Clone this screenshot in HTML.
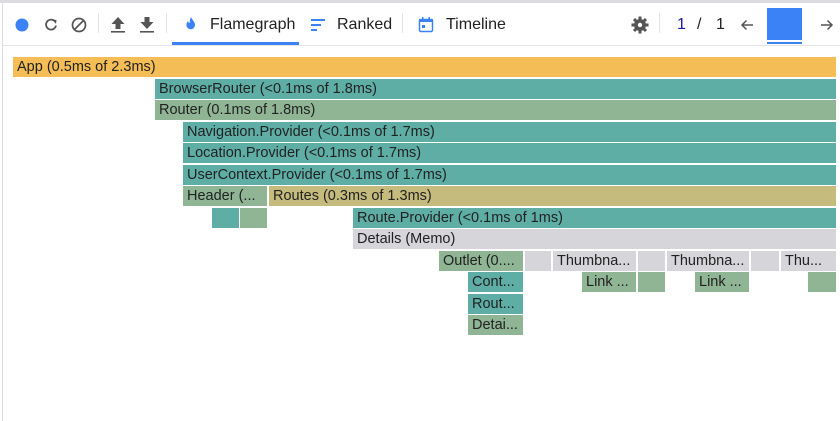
<!DOCTYPE html>
<html><head><meta charset="utf-8"><style>
*{margin:0;padding:0;box-sizing:border-box}
body{width:840px;height:421px;background:#fff;position:relative;overflow:hidden;font-family:"Liberation Sans",Arial,sans-serif;color:#222}
.top{position:absolute;left:0;top:0;width:840px;height:3px;background:#dcdce0}
.lb{position:absolute;left:2px;top:0;width:1px;height:421px;background:#dcdce0}
.hdr{position:absolute;left:3px;top:3px;right:0;height:43px;border-bottom:1px solid #e4e4e8}
.b{position:absolute;height:20px;font-size:14.5px;line-height:20px;padding-left:4px;white-space:nowrap;overflow:hidden;color:#222}
.y{background:#f4bd55}.t{background:#5eaea6}.g{background:#8fb595}.o{background:#c5bb7c}.s{background:#d5d5da}
.txt{position:absolute;font-size:16px;top:15px;line-height:20px}
.sep{position:absolute;top:13px;width:1px;height:20px;background:#e2e2e6}
</style></head><body>
<div class="top"></div><div class="lb"></div>
<div class="hdr"></div>
<svg style="position:absolute;left:0;top:0" width="840" height="46">
<circle cx="22" cy="25" r="6.5" fill="#3b82f6"/>
<path d="M55 21.5a5 5 0 1 0 1 4" fill="none" stroke="#555" stroke-width="1.8"/><path d="M52.5 19.5l4 0.5-0.5 4z" fill="#555"/>
<circle cx="79" cy="25" r="6.5" fill="none" stroke="#555" stroke-width="1.7"/><line x1="74.5" y1="29.5" x2="83.5" y2="20.5" stroke="#555" stroke-width="1.7"/>
<path d="M118 17l-6.5 7h4v5h5v-5h4z" fill="#555"/><rect x="111" y="31" width="14" height="1.6" fill="#555"/>
<path d="M147 29l-6.5-7h4v-5h5v5h4z" fill="#555"/><rect x="140" y="31" width="14" height="1.6" fill="#555"/>
<path d="M191 17c1 3 4 4.5 4 8a4.3 4.3 0 0 1-8.6 0c0-2 1-3 1.5-4 .5 1.5 1 2 1.8 2 0-2 .3-4 1.3-6z" fill="#3b82f6"/>
<rect x="172" y="42" width="127" height="3" fill="#3b82f6"/>
<rect x="311" y="19" width="14" height="2" fill="#3b82f6"/><rect x="311" y="24" width="10" height="2" fill="#3b82f6"/><rect x="311" y="29" width="6" height="2" fill="#3b82f6"/>
<rect x="419.5" y="19.5" width="13" height="12" rx="1.5" fill="none" stroke="#3b82f6" stroke-width="1.5"/><rect x="419" y="19" width="14" height="3" fill="#3b82f6"/><rect x="422" y="17" width="1.5" height="3" fill="#3b82f6"/><rect x="428.5" y="17" width="1.5" height="3" fill="#3b82f6"/><rect x="422" y="25" width="3" height="3" fill="#3b82f6"/>
<g stroke="#555" stroke-width="3"><line x1="640" y1="16.5" x2="640" y2="33.5"/><line x1="631.5" y1="25" x2="648.5" y2="25"/><line x1="634" y1="19" x2="646" y2="31"/><line x1="646" y1="19" x2="634" y2="31"/></g>
<circle cx="640" cy="25" r="6" fill="#555"/>
<circle cx="640" cy="25" r="2.2" fill="#fff"/>
<path d="M753 25h-11M746.5 20.5l-4.5 4.5 4.5 4.5" fill="none" stroke="#555" stroke-width="1.5"/>
<path d="M821 25h11M827.5 20.5l4.5 4.5-4.5 4.5" fill="none" stroke="#555" stroke-width="1.5"/>
<rect x="767" y="8" width="35" height="32" fill="#3b82f6"/><rect x="767" y="42" width="35" height="2" fill="#3b82f6"/>
</svg>
<div class="sep" style="left:98px"></div><div class="sep" style="left:166px"></div><div class="sep" style="left:402px"></div><div class="sep" style="left:659px"></div>
<div class="txt" style="left:210px">Flamegraph</div>
<div class="txt" style="left:337px">Ranked</div>
<div class="txt" style="left:446px">Timeline</div>
<div class="txt" style="left:677px;color:#1a1aa6">1</div>
<div class="txt" style="left:697px">/</div>
<div class="txt" style="left:716px">1</div>

<div class="b y" style="left:13px;width:823px;top:57px">App (0.5ms of 2.3ms)</div>
<div class="b t" style="left:155px;width:681px;top:78.5px">BrowserRouter (&lt;0.1ms of 1.8ms)</div>
<div class="b g" style="left:155px;width:681px;top:100px">Router (0.1ms of 1.8ms)</div>
<div class="b t" style="left:183px;width:653px;top:121.5px">Navigation.Provider (&lt;0.1ms of 1.7ms)</div>
<div class="b t" style="left:183px;width:653px;top:143px">Location.Provider (&lt;0.1ms of 1.7ms)</div>
<div class="b t" style="left:183px;width:653px;top:164.5px">UserContext.Provider (&lt;0.1ms of 1.7ms)</div>
<div class="b g" style="left:183px;width:84px;top:186px">Header (...</div>
<div class="b o" style="left:269px;width:567px;top:186px">Routes (0.3ms of 1.3ms)</div>
<div class="b t" style="left:212px;width:27px;top:207.5px"></div>
<div class="b g" style="left:240px;width:27px;top:207.5px"></div>
<div class="b t" style="left:353px;width:483px;top:207.5px">Route.Provider (&lt;0.1ms of 1ms)</div>
<div class="b s" style="left:353px;width:483px;top:229px">Details (Memo)</div>
<div class="b g" style="left:439px;width:84px;top:250.5px">Outlet (0....</div>
<div class="b s" style="left:525px;width:26px;top:250.5px"></div>
<div class="b s" style="left:553px;width:83px;top:250.5px">Thumbna...</div>
<div class="b s" style="left:638px;width:27px;top:250.5px"></div>
<div class="b s" style="left:667px;width:82px;top:250.5px">Thumbna...</div>
<div class="b s" style="left:751px;width:28px;top:250.5px"></div>
<div class="b s" style="left:781px;width:55px;top:250.5px">Thu...</div>
<div class="b t" style="left:468px;width:55px;top:272px">Cont...</div>
<div class="b g" style="left:582px;width:54px;top:272px">Link ...</div>
<div class="b g" style="left:638px;width:27px;top:272px"></div>
<div class="b g" style="left:695px;width:54px;top:272px">Link ...</div>
<div class="b g" style="left:808px;width:28px;top:272px"></div>
<div class="b t" style="left:468px;width:55px;top:293.5px">Rout...</div>
<div class="b g" style="left:468px;width:55px;top:315px">Detai...</div>
</body></html>
